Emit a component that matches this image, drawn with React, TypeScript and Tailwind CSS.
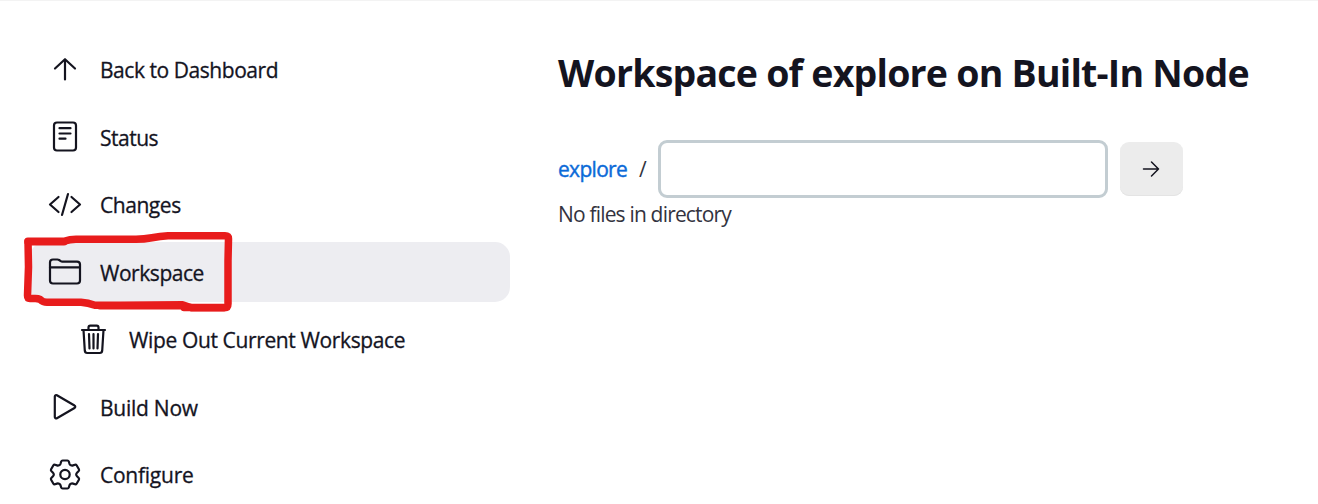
import type { ReactNode } from "react";

function Icon({ children }: { children: ReactNode }) {
  return (
    <svg viewBox="0 0.5 34 34" className="h-[34px] w-[34px] shrink-0" fill="none" stroke="#14141f" strokeWidth="2.2" strokeLinecap="round" strokeLinejoin="round">
      {children}
    </svg>
  );
}

const icons = {
  up: <path d="M7 16 17 6.700 27 16M17 7.200V27" />,
  status: (
    <>
      <rect x="6" y="3" width="22" height="28" rx="3" />
      <path d="M11.500 8.700h11M11.500 14h11M11.500 19.200h6" />
    </>
  ),
  code: <path d="M10.500 9.500 2 17l8.500 7.500M23.500 9.500 32 17l-8.500 7.500M20 6.500l-6 21" />,
  folder: (
    <>
      <path d="M2 26V8a3 3 0 0 1 3-3h4.400q1 0 1.700.500l1.600 1.100q.700.500 1.600.500H29a3 3 0 0 1 3 3V26a3 3 0 0 1-3 3H5a3 3 0 0 1-3-3Z" />
      <path d="M2 12.800h30" />
    </>
  ),
  trash: (
    <>
      <path d="m6.500 7.500 1.300 20.700q.200 2.300 2.400 2.300h12.600q2.200 0 2.400-2.300L26.500 7.500M5 7.500h23" />
      <path d="M11.500 7.500V5a1.800 1.800 0 0 1 1.800-1.800h6.400A1.800 1.800 0 0 1 21.500 5v2.500M16.500 11.500v14.500M12 11.500l.5 14.500M21 11.500l-.5 14.500" />
    </>
  ),
  play: <path d="M6.800 7v20.500c0 1.200 1.200 1.700 2.100 1.200l17.600-10.200a1.400 1.400 0 0 0 0-2.500L8.900 5.800C8 5.300 6.800 5.800 6.800 7Z" />,
  gear: (
    <>
      <circle cx="17" cy="17" r="4.700" />
      <path d="M14.600 3h4.800q1.100 0 1.400 1l.7 2.300q.4 1.100 1.400 1.500 1 .5 2.100.1l2-.7q1-.3 1.600.6l2.300 4q.5.900-.2 1.700l-1.700 1.700q-.8.800-.8 1.800t.8 1.800l1.700 1.700q.7.800.2 1.700l-2.300 4q-.6.900-1.600.6l-2-.7q-1.100-.4-2.100.1-1 .5-1.400 1.500l-.7 2.300q-.3 1-1.400 1h-4.800q-1.100 0-1.400-1l-.7-2.300q-.4-1-1.400-1.500-1-.5-2.100-.1l-2 .7q-1 .3-1.600-.6l-2.300-4q-.5-.9.200-1.700L5 18.800q.8-.8.8-1.800T5 15.200l-1.700-1.700q-.7-.8-.2-1.700l2.300-4Q6 6.900 7 7.200l2 .7q1.100.4 2.100-.1 1-.4 1.400-1.500l.7-2.300q.3-1 1.400-1Z" />
    </>
  ),
};

type Entry = { label: string; icon: ReactNode; tracking: string; active?: boolean; nested?: boolean };

const entries: Entry[] = [
  { label: "Back to Dashboard", icon: icons.up, tracking: "tracking-[-0.45px]" },
  { label: "Status", icon: icons.status, tracking: "tracking-[-0.5px]" },
  { label: "Changes", icon: icons.code, tracking: "tracking-[-0.45px]" },
  { label: "Workspace", icon: icons.folder, tracking: "tracking-[-0.45px]", active: true },
  { label: "Wipe Out Current Workspace", icon: icons.trash, tracking: "tracking-[-0.37px]", nested: true },
  { label: "Build Now", icon: icons.play, tracking: "tracking-[-0.25px]" },
  { label: "Configure", icon: icons.gear, tracking: "tracking-[-0.25px]" },
];

function Marker() {
  return (
    <svg viewBox="0 0 212 84" className="pointer-events-none absolute -top-[10px] -left-[8px] h-[84px] w-[212px]" fill="none" stroke="#e81c1c" strokeWidth="7.5" strokeLinecap="round" strokeLinejoin="round">
      <path d="M6 9.300h36q6-2 12-2h60q8 0 16-1.500t16-2h57q3.500 0 3.500 3l-.5 22v43q0 4-3.500 4h-33l-9-3-62 .5H73q-7-2.500-14-3H25q-4 0-7-3-2-1-6-.8H8q-2.500 0-2.500-3L6.500 35Z" />
      <path d="M6 9.800h36M78 73.800h80M162 75.500h40" />
    </svg>
  );
}

export default function App() {
  return (
    <div className="flex h-[504px] w-full overflow-hidden border-t border-[#f3f3f3] bg-white font-['Open_Sans',sans-serif] text-[21px] text-[#14141f]">
      <nav className="ml-[30px] flex w-[480px] shrink-0 flex-col gap-[7.5px] pt-[38.5px]">
        {entries.map((e) => (
          <a
            key={e.label}
            className={`relative flex h-[60px] shrink-0 items-center rounded-[15px] whitespace-nowrap ${e.nested ? "pl-[47px] gap-[18px]" : "pl-[18px] gap-[18px]"} ${e.active ? "bg-[#ededf1]" : ""}`}
          >
            <Icon>{e.icon}</Icon>
            <span className={`pt-[3px] [-webkit-text-stroke:0.3px_currentColor] ${e.tracking}`}>{e.label}</span>
            {e.active && <Marker />}
          </a>
        ))}
      </nav>
      <main className="ml-[48px] flex flex-col items-start">
        <h1 className="mt-[46px] text-[37.5px] leading-[52px] font-bold tracking-[-0.78px] whitespace-nowrap">
          Workspace of explore on Built-In Node
        </h1>
        <form className="mt-[41px] flex items-center">
          <a className="w-[69px] pt-[1px] tracking-[-0.7px] text-[#0b6ad8] [-webkit-text-stroke:0.4px_currentColor]">explore</a>
          <span className="ml-[12px] w-[19px] pt-[1px] text-[#333340]">/</span>
          <input className="h-[58px] w-[450px] rounded-[9px] border-3 border-[#c3cdd2] bg-white px-3 outline-none" />
          <button type="button" className="ml-[12px] flex h-[54px] w-[63px] items-center justify-center rounded-[9px] bg-[#ececec] pr-px shadow-[inset_0_-1px_0_#e4e4e4]">
            <svg viewBox="0 0 18 18" className="h-[18px] w-[18px]" fill="none" stroke="#14141f" strokeWidth="1.5" strokeLinecap="round" strokeLinejoin="round">
              <path d="M1.500 9h15M9.500 2l7 7-7 7" />
            </svg>
          </button>
        </form>
        <p className="mt-[1px] leading-[30px] tracking-[-0.82px] text-[#333340]">No files in directory</p>
      </main>
    </div>
  );
}
